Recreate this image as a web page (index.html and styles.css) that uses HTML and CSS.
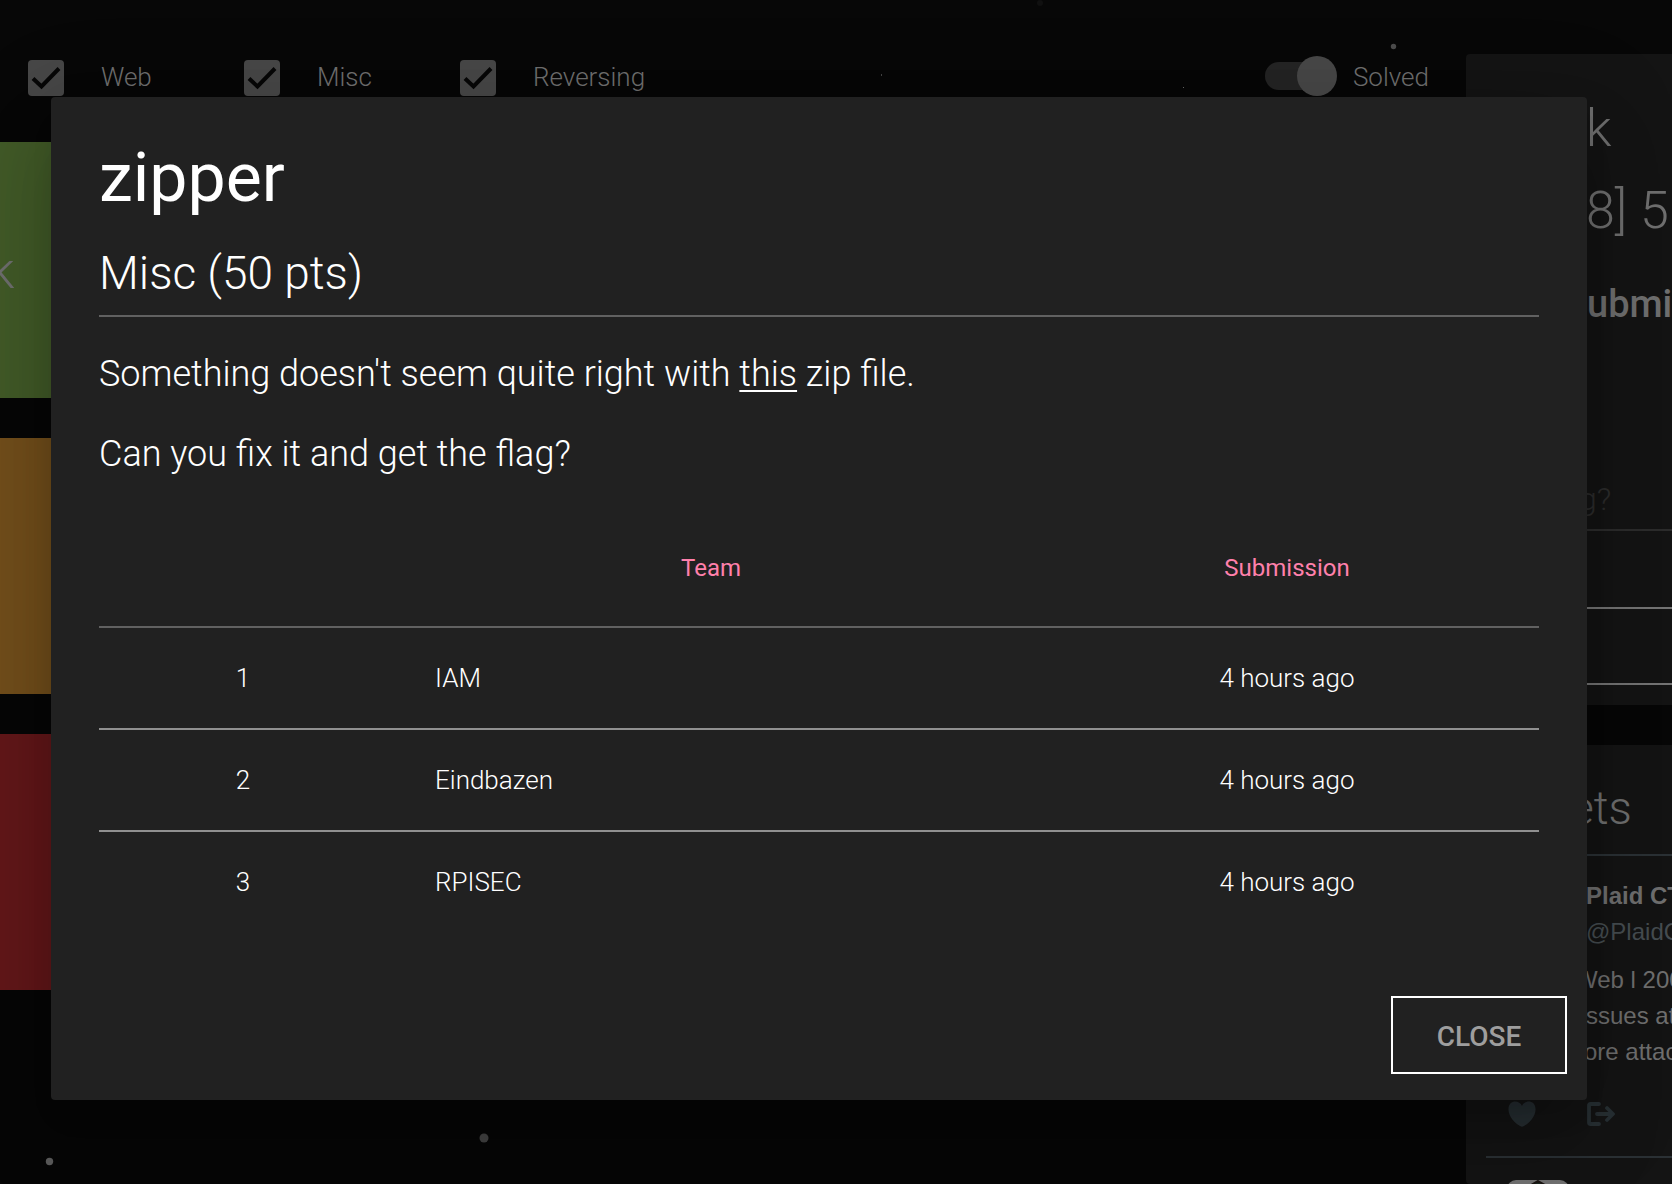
FILE: index.html
```html
<!DOCTYPE html>
<html lang="en">
<head>
<meta charset="utf-8">
<title>zipper</title>
<meta name="viewport" content="width=device-width, initial-scale=1">
<link rel="stylesheet" href="styles.css">
</head>
<body>
<div class="page">
  <svg class="stars" aria-hidden="true">
    <circle cx="1040" cy="3" r="3" fill="#101010"/>
    <rect x="881" y="74" width="1" height="2" fill="#444"/>
    <rect x="1183" y="87" width="1" height="1" fill="#666"/>
    <circle cx="1393.500" cy="46.500" r="2.700" fill="#4b4b4b"/>
    <circle cx="484" cy="1138" r="4.500" fill="#434343"/>
    <circle cx="49.500" cy="1161.500" r="3.700" fill="#5c5c5c"/>
  </svg>

  <main class="board">
    <form class="filters">
      <label class="filter"><input class="check" type="checkbox" checked><span>Web</span></label>
      <label class="filter"><input class="check" type="checkbox" checked><span>Misc</span></label>
      <label class="filter"><input class="check" type="checkbox" checked><span>Reversing</span></label>
      <label class="solved"><input class="switch" type="checkbox" checked><span>Solved</span></label>
    </form>
    <div class="cards">
      <div class="card card-green"><span class="card-name">k</span></div>
      <div class="card card-amber"></div>
      <div class="card card-red"></div>
    </div>
  </main>

  <aside class="sidebar">
    <section class="panel status">
      <h2 class="status-line">k</h2>
      <p class="status-line">8] 5</p>
      <h3 class="status-submit">ubmi</h3>
      <div class="flag-field">g?</div>
      <div class="rule-row"></div>
      <div class="rule-row"></div>
    </section>
    <section class="panel tweets">
      <h2 class="tweets-title">ets</h2>
      <article class="tweet">
        <p class="tweet-author">Plaid CT</p>
        <p class="tweet-handle">@PlaidC</p>
        <div class="tweet-text">
          <p class="lead">Web l 200</p>
          <p>ssues at</p>
          <p class="lead-short">ore attac</p>
        </div>
        <div class="tweet-actions">
          <svg width="28" height="26" viewBox="0 0 28 26" aria-hidden="true"><path fill="currentColor" d="M14 5C11.500 -1.500 0 -1.500 .5 9C.8 16 7 22.500 12.500 25.300Q14 26.200 15.500 25.300C21 22.500 27.200 16 27.500 9C28 -1.500 16.500 -1.500 14 5Z"/></svg>
          <svg width="28" height="24" viewBox="0 0 28 24" aria-hidden="true" fill="none" stroke="currentColor" stroke-width="3.800" stroke-linecap="round" stroke-linejoin="round"><path d="M12 2H3.500Q2 2 2 3.500V20.500Q2 22 3.500 22H12M10 12H25M20 6L26 12L20 18"/></svg>
        </div>
      </article>
      <div class="next-tweet">
        <svg width="62" height="40" viewBox="0 0 62 40" aria-hidden="true"><rect width="62" height="60" rx="9" fill="#737373"/><path d="M31 1L50 12V40H12V12Z" fill="#1b2a20" stroke="#1a1512" stroke-width="2"/></svg>
      </div>
    </section>
  </aside>

  <div class="overlay">
    <div class="dialog" role="dialog" aria-modal="true" aria-labelledby="dialog-title">
      <h1 class="title" id="dialog-title">zipper</h1>
      <h2 class="subtitle">Misc (50 pts)</h2>
      <div class="description">
        <p>Something doesn't seem quite right with <a href="#">this</a> zip file.</p>
        <p>Can you fix it and get the flag?</p>
      </div>
      <table class="solves">
        <colgroup><col class="col-rank"><col class="col-team"><col class="col-time"></colgroup>
        <thead>
          <tr><th></th><th scope="col">Team</th><th scope="col">Submission</th></tr>
        </thead>
        <tbody>
          <tr><td>1</td><td class="team">IAM</td><td>4 hours ago</td></tr>
          <tr><td>2</td><td class="team">Eindbazen</td><td>4 hours ago</td></tr>
          <tr><td>3</td><td class="team">RPISEC</td><td>4 hours ago</td></tr>
        </tbody>
      </table>
      <div class="actions"><button class="close" type="button">CLOSE</button></div>
    </div>
  </div>
</div>
</body>
</html>
```

FILE: styles.css
```css
* { box-sizing: border-box; }

body {
  margin: 0;
  background: #070707;
  color: #6f6f6f;
  font-family: Roboto, "Liberation Sans", sans-serif;
  font-weight: 300;
}

h1, h2, h3, p { margin: 0; font-weight: 300; }

.page {
  position: relative;
  display: flex;
  height: 100vh;
  overflow: hidden;
}

.stars {
  position: absolute;
  inset: 0;
  width: 100%;
  height: 100%;
}

/* Challenge board */
.board { flex: 1; min-width: 0; }

.filters {
  display: flex;
  align-items: center;
  padding: 56px 37px 0 28px;
  font-size: 26px;
  line-height: 42px;
}

.filter {
  display: flex;
  align-items: center;
  gap: 37px;
  width: 216px;
}

.check {
  appearance: none;
  width: 36px;
  height: 36px;
  margin: 2px 0 0;
  border-radius: 4px;
  background: #474747 url("data:image/svg+xml,%3Csvg xmlns='http://www.w3.org/2000/svg' viewBox='0 0 36 36'%3E%3Cpath d='M5 18.500L13.500 26.500L31 8.500' fill='none' stroke='%23070707' stroke-width='4'/%3E%3C/svg%3E");
}

.solved {
  display: flex;
  align-items: center;
  gap: 16px;
  margin-left: auto;
}

.switch {
  appearance: none;
  display: flex;
  align-items: center;
  width: 72px;
  height: 28px;
  margin: 0 0 2px;
  border-radius: 14px;
  background: linear-gradient(#242424, #242424) left / 60px 28px no-repeat;
}

.switch::before {
  content: "";
  flex: none;
  width: 40px;
  height: 40px;
  margin-left: 32px;
  border-radius: 50%;
  background: #474747;
}

.cards {
  display: grid;
  gap: 40px;
  padding: 44px 40px 0 0;
}

.card {
  display: flex;
  align-items: center;
  height: 256px;
}

.card-green { background: #425b28; }
.card-amber { background: #734f1b; }
.card-red { background: #631719; }

.card-name {
  margin-left: -11px;
  padding-top: 2px;
  font-size: 52px;
  line-height: 60px;
}

/* Sidebar */
.sidebar {
  display: flex;
  flex-direction: column;
  gap: 40px;
  width: 206px;
  padding-top: 54px;
  white-space: nowrap;
}

.panel {
  overflow: hidden;
  border-radius: 4px 0 0 4px;
  background: #141414;
}

.status { height: 651px; padding-top: 34px; }

.status-line {
  padding-left: 120px;
  font-size: 52px;
  line-height: 82px;
}

.status-submit {
  padding: 30px 0 0 121px;
  font-size: 38px;
  font-weight: 500;
  line-height: 44px;
}

.flag-field {
  margin-top: 129px;
  padding: 24px 0 10px 113px;
  border-bottom: 2px solid #2c2c2c;
  color: #2c2c2c;
  font-size: 32px;
  line-height: 40px;
}

.rule-row {
  height: 76px;
  border-bottom: 2px solid #747474;
}

.flag-field + .rule-row { height: 78px; }

.tweets { flex: 1; }

.tweets-title {
  padding: 36px 0 18px 104px;
  border-bottom: 2px solid #2b3135;
  font-size: 46px;
  line-height: 55px;
}

.tweet {
  margin-left: 20px;
  padding-top: 22px;
  border-bottom: 2px solid #2b3135;
  font-family: "Liberation Sans", Arial, sans-serif;
  font-weight: 400;
  font-size: 24px;
  line-height: 36px;
}

.tweet p { padding-left: 100px; font-weight: 400; }
.tweet .tweet-author { font-weight: 700; }
.tweet .tweet-handle { color: #464d51; }
.tweet-text { padding-top: 12px; }
.tweet .tweet-text .lead { padding-left: 89px; }
.tweet .tweet-text .lead-short { padding-left: 98px; }

.tweet-actions {
  display: flex;
  align-items: center;
  gap: 51px;
  padding: 31px 0 29px 22px;
  color: #283034;
}

.next-tweet { padding: 22px 0 0 41px; }

/* Challenge dialog */
.overlay {
  position: absolute;
  inset: 0;
  padding: 97px 85px 84px 51px;
}

.dialog {
  padding: 40px 48px 26px;
  border-radius: 4px;
  background: #212121;
  box-shadow:
    0 22px 30px -14px rgba(0, 0, 0, .2),
    0 48px 76px 6px rgba(0, 0, 0, .14),
    0 18px 92px 16px rgba(0, 0, 0, .12);
  color: #fff;
}

.title {
  font-size: 68px;
  font-weight: 400;
  line-height: 82px;
}

.subtitle {
  margin-top: 26px;
  padding-bottom: 14px;
  border-bottom: 2px solid #616161;
  font-size: 46px;
  line-height: 56px;
}

.description {
  display: grid;
  gap: 40px;
  padding: 37px 0 40px;
  font-size: 36px;
  line-height: 40px;
}

.description a {
  color: inherit;
  text-decoration-thickness: 2px;
  text-underline-offset: 4px;
  text-decoration-skip-ink: none;
}

.solves {
  width: 100%;
  border-collapse: separate;
  border-spacing: 0;
  table-layout: fixed;
  font-size: 26px;
  text-align: center;
}

.col-rank { width: 20%; }
.col-team { width: 45%; }
.col-time { width: 35%; }

.solves th {
  height: 114px;
  padding: 0 0 4px;
  border-bottom: 2px solid #616161;
  color: #ff80ab;
  font-size: 24px;
  font-weight: 400;
}

.solves td {
  height: 102px;
  padding: 0;
  border-bottom: 2px solid #909090;
}

.solves tbody tr:last-child td { border-bottom-color: transparent; }
.solves .team { padding-left: 48px; text-align: left; }

.actions {
  display: flex;
  justify-content: flex-end;
  margin: 62px -28px 0 0;
}

.close {
  width: 176px;
  height: 78px;
  padding: 3px 0 0;
  border: 2px solid #fff;
  background: transparent;
  color: #9e9e9e;
  font: 500 28px/32px Roboto, "Liberation Sans", sans-serif;
}
```
